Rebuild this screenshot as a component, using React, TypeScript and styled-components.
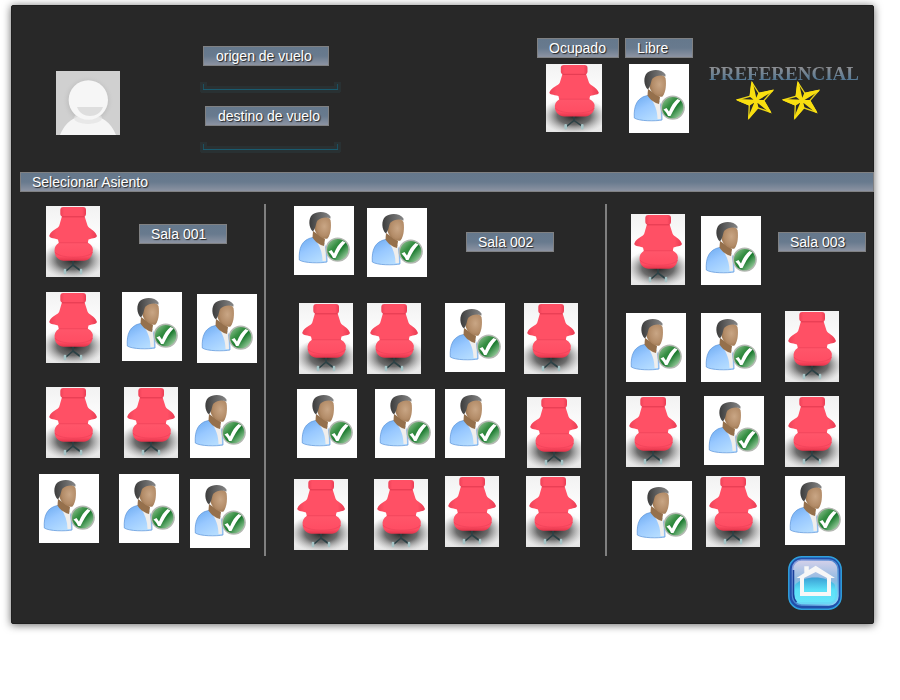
import React from "react";
import styled, { createGlobalStyle } from "styled-components";

type Place = "start" | "center" | "end";
type SeatKind = "taken" | "free";

interface SeatData {
  kind: SeatKind;
  justify: Place;
  align: Place;
}

interface RowData {
  space: number;
  minHeight?: number;
  seats: SeatData[];
}

interface RoomData {
  name: string;
  top: number;
  left: number;
  frontLead: number;
  frontGap: number;
  tagGap: number;
  tagAlign: Place;
  front: SeatData[];
  /** Seat columns with the aisles between them: seat, aisle, seat, ... */
  tracks: string;
  rows: RowData[];
}

const GlobalStyle = createGlobalStyle`
  * { box-sizing: border-box; }
  body {
    margin: 0;
    background: #fff;
    font-family: "Liberation Sans", Arial, sans-serif;
    font-size: 14px;
  }
`;

const Panel = styled.main`
  margin: 5px 26px 24px 11px;
  padding-bottom: 13px;
  background: #282828;
  border: 1px solid #1f1f1f;
  border-radius: 2px;
  box-shadow: 0 1px 8px rgba(0, 0, 0, 0.6);
`;

const Defs = styled.svg`
  display: block;
  width: 0;
  height: 0;
`;

const Header = styled.header`
  display: flex;
  align-items: flex-start;
  min-height: 166px;
  padding: 32px 14px 0 44px;
`;

const Avatar = styled.svg`
  display: block;
  flex: none;
  width: 64px;
  height: 64px;
  margin-top: 33px;
`;

const Flight = styled.form`
  display: flex;
  flex-direction: column;
  align-items: flex-start;
  margin: 8px 0 0 80px;
`;

const FieldHead = styled.div`
  display: flex;
  justify-content: flex-end;
  width: 129px;
`;

const Tag = styled.span<{ $width: number }>`
  display: block;
  flex: none;
  width: ${(p) => p.$width}px;
  height: 20px;
  padding-left: 11px;
  border: 1px solid #808183;
  background: linear-gradient(#65788c 0%, #687a8e 50%, #8c93a2 100%);
  color: #fff;
  line-height: 18px;
  white-space: nowrap;
  text-shadow: 1px 1px 1px #222;
`;

const FieldLabel = styled(Tag).attrs({ as: "label" })<{ htmlFor?: string }>`
  padding-left: 12px;
`;

const FlightInput = styled.input`
  width: 141px;
  height: 27px;
  margin-bottom: 13px;
  padding: 2px 8px 6px;
  border: 0;
  outline: 0;
  color: #fff;
  font: inherit;
  background:
    linear-gradient(#1a5a6e, #1a5a6e) 3px 23px / 135px 1px no-repeat,
    linear-gradient(#1c5060, #1c5060) 3px 18px / 1px 5px no-repeat,
    linear-gradient(#1c5060, #1c5060) 137px 18px / 1px 5px no-repeat,
    linear-gradient(#293133, #293133) 1px 20px / 139px 7px no-repeat,
    linear-gradient(#293133, #293133) 0 16px / 7px 10px no-repeat,
    linear-gradient(#293133, #293133) 134px 16px / 7px 10px no-repeat;
`;

const Legend = styled.div`
  display: flex;
  gap: 6px;
  margin-left: auto;
`;

const LegendItem = styled.div<{ $lead: number }>`
  svg {
    margin: 6px 0 0 ${(p) => p.$lead}px;
  }
`;

const Picture = styled.svg<{ $w: number; $h: number }>`
  display: block;
  width: ${(p) => p.$w}px;
  height: ${(p) => p.$h}px;
`;

const Rating = styled.div`
  display: flex;
  flex-direction: column;
  align-items: center;
  margin: 25px 0 0 16px;
`;

const RatingTitle = styled.strong`
  font: bold 19px/22px "Liberation Serif", "Times New Roman", serif;
  color: transparent;
  background: linear-gradient(#8c8e92 20%, #4c7595 85%);
  background-clip: text;
  -webkit-background-clip: text;
`;

const Stars = styled.div`
  display: flex;
  gap: 8px;
  margin: -4px 12px 0 0;
`;

const SectionTitle = styled.h1`
  margin: 0 -1px 12px 8px;
  height: 20px;
  padding-left: 11px;
  border: 1px solid #808183;
  background: linear-gradient(#65788c 0%, #687a8e 50%, #8c93a2 100%);
  color: #fff;
  font-size: 14px;
  font-weight: normal;
  line-height: 18px;
  text-shadow: 1px 1px 1px #222;
`;

const Rooms = styled.div`
  display: grid;
  grid-template-columns: 252fr 341fr 268fr;
  min-height: 352px;
`;

const Room = styled.section<{ $top: number; $left: number }>`
  padding: ${(p) => p.$top}px 0 0 ${(p) => p.$left}px;
  & + & {
    border-left: 2px solid #808080;
  }
`;

const Front = styled.div<{ $lead: number; $gap: number }>`
  display: flex;
  gap: ${(p) => p.$gap}px;
  min-height: 71px;
  padding-left: ${(p) => p.$lead}px;
`;

const RoomTag = styled.div<{ $gap: number; $align: Place }>`
  align-self: ${(p) => p.$align};
  padding-top: ${(p) => (p.$align === "start" ? 18 : 0)}px;
  margin-left: ${(p) => p.$gap}px;
`;

const SeatRow = styled.div<{ $tracks: string; $space: number; $min: number }>`
  display: grid;
  grid-template-columns: ${(p) => p.$tracks};
  margin-top: ${(p) => p.$space}px;
  min-height: ${(p) => p.$min}px;
`;

const SeatButton = styled.button<{ $justify: Place; $align: Place; $column?: number }>`
  display: block;
  grid-column: ${(p) => p.$column ?? "auto"};
  justify-self: ${(p) => p.$justify};
  align-self: ${(p) => p.$align};
  padding: 0;
  border: 0;
  background: none;
  cursor: pointer;
`;

const Footer = styled.footer`
  display: flex;
  justify-content: flex-end;
  padding-right: 31px;
`;

const HomeLink = styled.a`
  display: block;
`;

const taken = (justify: Place = "start", align: Place = "start"): SeatData => ({ kind: "taken", justify, align });
const free = (justify: Place = "start", align: Place = "start"): SeatData => ({ kind: "free", justify, align });

const rooms: RoomData[] = [
  {
    name: "Sala 001",
    top: 2,
    left: 27,
    frontLead: 7,
    frontGap: 0,
    tagGap: 39,
    tagAlign: "start",
    front: [taken()],
    tracks: "61px 19px 63px 8px 67px",
    rows: [
      { space: 15, seats: [taken("end"), free("end"), free("end", "end")] },
      { space: 24, seats: [taken("end"), taken("center"), free("start", "end")] },
      { space: 16, minHeight: 74, seats: [free(), free(), free("start", "end")] },
    ],
  },
  {
    name: "Sala 002",
    top: 2,
    left: 28,
    frontLead: 0,
    frontGap: 13,
    tagGap: 26,
    tagAlign: "center",
    front: [free(), free("start", "end")],
    tracks: "63px 10px 68px 10px 60px 19px 57px",
    rows: [
      { space: 26, seats: [taken("center"), taken(), free(), taken()] },
      { space: 15, minHeight: 79, seats: [free("end"), free("end"), free(), taken("end", "end")] },
      { space: 8, minHeight: 74, seats: [taken("start", "end"), taken("center", "end"), taken(), taken("center")] },
    ],
  },
  {
    name: "Sala 003",
    top: 10,
    left: 19,
    frontLead: 5,
    frontGap: 16,
    tagGap: 1,
    tagAlign: "start",
    front: [taken(), free("start", "end")],
    tracks: "66px 9px 63px 21px 60px",
    rows: [
      { space: 26, seats: [free("start", "end"), free("start", "end"), taken()] },
      { space: 14, seats: [taken(), free("end"), taken()] },
      { space: 9, minHeight: 74, seats: [free("end", "end"), taken("center"), free()] },
    ],
  },
];

const SharedDrawings = () => (
  <Defs aria-hidden="true">
    <defs>
      <linearGradient id="wall" x1="0" y1="0" x2="0" y2="1">
        <stop offset="0" stopColor="#f2f2f2" />
        <stop offset=".5" stopColor="#fff" />
        <stop offset="1" stopColor="#e6e6e6" />
      </linearGradient>
      <radialGradient id="floor">
        <stop offset="0" stopColor="#222" />
        <stop offset=".5" stopColor="#4c4c4c" stopOpacity=".8" />
        <stop offset="1" stopColor="#aaa" stopOpacity="0" />
      </radialGradient>
      <linearGradient id="fabric" x1="0" y1="0" x2="1" y2="0">
        <stop offset="0" stopColor="#ee4258" />
        <stop offset=".15" stopColor="#ff5065" />
        <stop offset=".85" stopColor="#ff5065" />
        <stop offset="1" stopColor="#ea3c53" />
      </linearGradient>
      <linearGradient id="cushion" x1="0" y1="0" x2="0" y2="1">
        <stop offset="0" stopColor="#ff566a" />
        <stop offset=".75" stopColor="#ff4d63" />
        <stop offset="1" stopColor="#e4344b" />
      </linearGradient>
      <linearGradient id="hair" x1="0" y1="0" x2="1" y2="0">
        <stop offset="0" stopColor="#3c3c3c" />
        <stop offset=".4" stopColor="#5c5c5c" />
        <stop offset="1" stopColor="#858585" />
      </linearGradient>
      <radialGradient id="skin" cx=".6" cy=".45" r=".7">
        <stop offset="0" stopColor="#c9a685" />
        <stop offset=".6" stopColor="#b38c68" />
        <stop offset="1" stopColor="#8f6943" />
      </radialGradient>
      <linearGradient id="shirt" x1="0" y1="0" x2=".6" y2="1">
        <stop offset="0" stopColor="#6aa9f0" />
        <stop offset=".5" stopColor="#98c8ff" />
        <stop offset="1" stopColor="#b4dcff" />
      </linearGradient>
      <linearGradient id="badge" x1="0" y1="0" x2="1" y2="1">
        <stop offset="0" stopColor="#a8cfa8" />
        <stop offset=".35" stopColor="#3a9146" />
        <stop offset=".55" stopColor="#1a7a2e" />
        <stop offset="1" stopColor="#d5f2d2" />
      </linearGradient>
      <symbol id="chair" viewBox="0 0 54 71" preserveAspectRatio="none">
        <rect width="54" height="71" fill="url(#wall)" />
        <ellipse cx="27" cy="54" rx="32" ry="19" fill="url(#floor)" />
        <path d="M27 54v5L20 65M27 59l8 6" stroke="#2c4145" strokeWidth="1.600" fill="none" />
        <path d="M19 64v3M35 64v3" stroke="#a5c4c6" strokeWidth="2.600" strokeLinecap="round" />
        <path
          d="M16 10H38.500L41.500 19.500C43 23 48 23 50.800 29.500C51.500 32 47 32 42.500 33.500L41.500 38H13L12 33.500C7 32 3 32 3.300 29.500C6 23 12 23 13.300 19.500Z"
          fill="url(#fabric)"
        />
        <rect x="14.300" y="1" width="25.700" height="9.800" rx="3" fill="url(#fabric)" />
        <path d="M16 10.800h22.500" stroke="#d9344a" strokeWidth=".8" />
        <path
          d="M13 36.700H42C46 39 47.500 42 46.700 45C46.500 51 42 54.700 38 54.700H17.500C13 54.700 9 51 8.700 46C8 42 9.500 39 13 36.700Z"
          fill="url(#cushion)"
        />
        <path d="M13 36.700h29M9 46c4 7 34 7 37.500 0" stroke="#ee4259" strokeWidth=".7" fill="none" />
      </symbol>
      <symbol id="person" viewBox="0 0 60 69">
        <rect width="60" height="69" fill="#fff" />
        <path
          d="M5.300 54C4.500 42 8 33.500 18.500 31.500L26 34C31 36 33 42 33 56C27 57.300 10 57.300 5.300 54Z"
          fill="url(#shirt)"
          stroke="#5b93d8"
          strokeWidth=".7"
        />
        <path d="M21 33L31 38L32 55H28.500C28.500 47 26 40 21 33Z" fill="#f0eeec" />
        <path d="M19 25L31 33L30 40C26 39 21 36 18.500 31.500Z" fill="#95704c" />
        <path d="M21 15C24 9 33 9 36.500 14C37.500 20 37 28 33.500 32.500C29 34 22 29 20.500 23Z" fill="url(#skin)" />
        <path
          d="M19 25.500C14.500 22 14 12 18.500 8.500C23 5 33 5 36.500 10.500V12.500C32 10.800 27 11.500 23.500 14.500C21.500 17 22.500 21 19 25.500Z"
          fill="url(#hair)"
        />
        <circle cx="43.700" cy="43.600" r="11.400" fill="url(#badge)" stroke="#b4b8b2" strokeWidth="1.500" />
        <path
          d="M34.500 45.500L37.500 44L40 47.500C42 42 45 38 48.500 35L51.500 36.500C47 41 44.500 46 41.500 52H39C38 49.500 36.500 47.500 34.500 45.500Z"
          fill="#fff"
        />
      </symbol>
    </defs>
  </Defs>
);

const SeatPicture = ({ kind, w, h }: { kind: SeatKind; w?: number; h?: number }) => (
  <Picture $w={w ?? (kind === "taken" ? 54 : 60)} $h={h ?? (kind === "taken" ? 71 : 69)} aria-hidden="true">
    <use href={kind === "taken" ? "#chair" : "#person"} width="100%" height="100%" />
  </Picture>
);

const Seat = ({ seat, column }: { seat: SeatData; column?: number }) => (
  <SeatButton
    type="button"
    aria-label={seat.kind === "taken" ? "Ocupado" : "Libre"}
    $justify={seat.justify}
    $align={seat.align}
    $column={column}
  >
    <SeatPicture kind={seat.kind} />
  </SeatButton>
);

const Star = () => (
  <Picture $w={38} $h={39} viewBox="0 0 114 116" aria-hidden="true">
    <path
      d="M48 4L69 37L110 28L83 59L103 93L65 80L38 111L40 71L4 56L43 45Z"
      fill="#282828"
      stroke="#e9d418"
      strokeWidth="4"
    />
    <path
      d="M60 58L48 4L43 45ZM60 58L110 28L69 37ZM60 58L103 93L83 59ZM60 58L38 111L65 80ZM60 58L4 56L40 71Z"
      fill="#f9df10"
      stroke="#f9df10"
      strokeWidth="5"
    />
  </Picture>
);

const HomePicture = () => (
  <Picture $w={54} $h={54} viewBox="0 0 54 54" aria-hidden="true">
    <defs>
      <linearGradient id="glass" x1="0" y1="0" x2="0" y2="1">
        <stop offset="0" stopColor="#d5d1ea" />
        <stop offset=".45" stopColor="#8fb9e1" />
        <stop offset=".7" stopColor="#5bddf7" />
        <stop offset="1" stopColor="#6bd8f6" />
      </linearGradient>
      <linearGradient id="pool" x1="0" y1="0" x2="0" y2="1">
        <stop offset="0" stopColor="#3a9fd4" />
        <stop offset=".5" stopColor="#5be0f8" />
        <stop offset="1" stopColor="#67e5fa" />
      </linearGradient>
      <linearGradient id="rim" x1="0" y1="0" x2="1" y2="1">
        <stop offset="0" stopColor="#8f9fe0" />
        <stop offset=".5" stopColor="#4a86d0" />
        <stop offset="1" stopColor="#8fdcfa" />
      </linearGradient>
    </defs>
    <rect x=".8" y=".8" width="52.400" height="52.400" rx="13" fill="#214faa" stroke="#30a0dd" strokeWidth="1.500" />
    <rect x="4.500" y="4" width="45.500" height="45" rx="9" fill="url(#glass)" stroke="url(#rim)" strokeWidth="1.500" />
    <path d="M5.500 14v24c0 4 1 6 3 8" stroke="#1b3f9a" strokeWidth="1.500" fill="none" />
    <path d="M7 29c8-10 32-10 40 0v11c0 4-3 6-6 6H13c-4 0-6-2-6-6Z" fill="url(#pool)" />
    <path
      fillRule="evenodd"
      d="M8.500 22L16.300 17V10.300H20.800V14L27.700 9.700L47 22H43V40H12V22ZM16 22V36H39V22L27.700 16Z"
      fill="#f7f7f7"
    />
  </Picture>
);

const AvatarPicture = () => (
  <Avatar viewBox="0 0 64 64" role="img" aria-label="Pasajero">
    <defs>
      <radialGradient id="halo">
        <stop offset=".7" stopColor="#b4b4b4" />
        <stop offset="1" stopColor="#d0d0d0" stopOpacity="0" />
      </radialGradient>
    </defs>
    <rect width="64" height="64" fill="#d0d0d0" />
    <circle cx="32" cy="30" r="26" fill="url(#halo)" opacity=".7" />
    <path d="M4 64C9 51 19 44 32 44s23 7 28 20Z" fill="#f5f5f5" />
    <ellipse cx="32" cy="47" rx="14" ry="6" fill="#e3e3e3" opacity=".7" />
    <circle cx="32.300" cy="29" r="19.700" fill="#f6f6f6" />
    <path d="M21 36h26c-4 12-22 12-26 0Z" fill="#dedede" />
  </Avatar>
);

export default function App() {
  return (
    <>
      <GlobalStyle />
      <Panel>
        <SharedDrawings />
        <Header>
          <AvatarPicture />
          <Flight>
            <FieldHead>
              <FieldLabel htmlFor="origen" $width={126}>origen de vuelo</FieldLabel>
            </FieldHead>
            <FlightInput id="origen" />
            <FieldHead>
              <FieldLabel htmlFor="destino" $width={124}>destino de vuelo</FieldLabel>
            </FieldHead>
            <FlightInput id="destino" />
          </Flight>
          <Legend>
            <LegendItem $lead={9}>
              <Tag $width={82}>Ocupado</Tag>
              <SeatPicture kind="taken" w={56} h={68} />
            </LegendItem>
            <LegendItem $lead={4}>
              <Tag $width={68}>Libre</Tag>
              <SeatPicture kind="free" />
            </LegendItem>
          </Legend>
          <Rating>
            <RatingTitle>PREFERENCIAL</RatingTitle>
            <Stars>
              <Star />
              <Star />
            </Stars>
          </Rating>
        </Header>
        <SectionTitle>Selecionar Asiento</SectionTitle>
        <Rooms>
          {rooms.map((room) => (
            <Room key={room.name} $top={room.top} $left={room.left} aria-label={room.name}>
              <Front $lead={room.frontLead} $gap={room.frontGap}>
                {room.front.map((seat, i) => (
                  <Seat key={i} seat={seat} />
                ))}
                <RoomTag $gap={room.tagGap} $align={room.tagAlign}>
                  <Tag $width={88}>{room.name}</Tag>
                </RoomTag>
              </Front>
              {room.rows.map((row, i) => (
                <SeatRow key={i} $tracks={room.tracks} $space={row.space} $min={row.minHeight ?? 71}>
                  {row.seats.map((seat, j) => (
                    <Seat key={j} seat={seat} column={2 * j + 1} />
                  ))}
                </SeatRow>
              ))}
            </Room>
          ))}
        </Rooms>
        <Footer>
          <HomeLink href="#inicio" aria-label="Inicio">
            <HomePicture />
          </HomeLink>
        </Footer>
      </Panel>
    </>
  );
}
